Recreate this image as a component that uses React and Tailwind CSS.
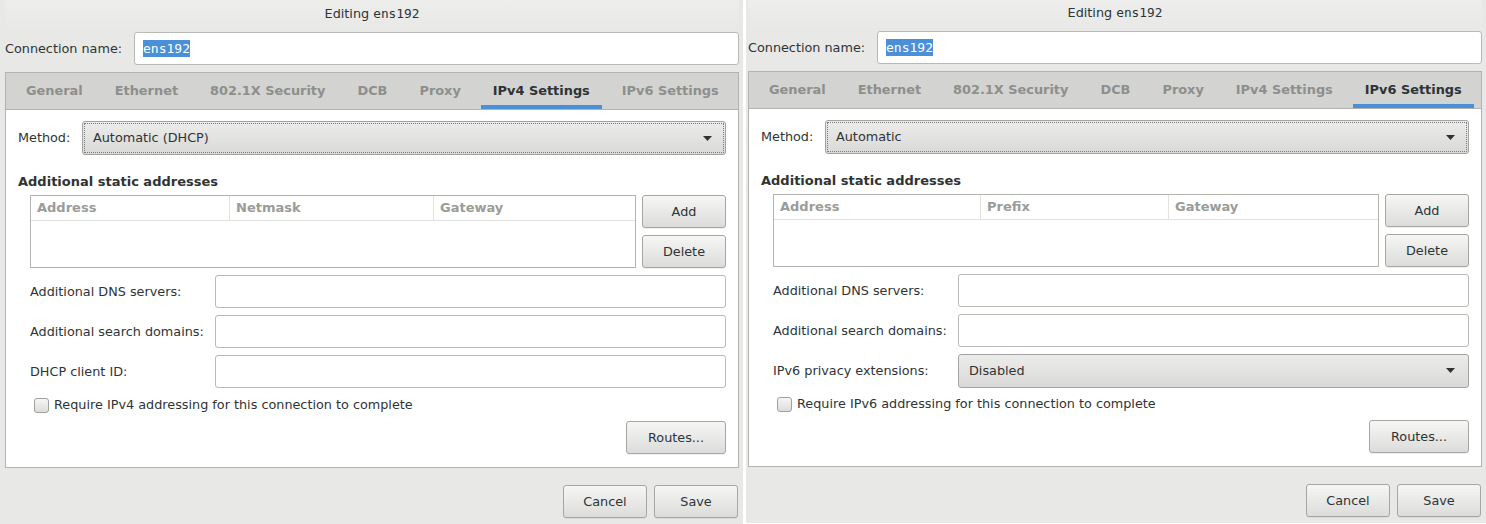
const sans = { fontFamily: '"DejaVu Sans", "Liberation Sans", sans-serif' };

const Button = ({ children, className = '' }) => (
  <button
    className={`h-[33px] rounded-[3px] border border-[#a6a6a4] bg-gradient-to-b from-[#f6f6f5] to-[#dcdcda] text-[12.8px] text-[#2e3436] shadow-[0_1px_0_rgba(0,0,0,0.06)] ${className}`}
  >
    {children}
  </button>
);

const TextInput = ({ className = '' }) => (
  <div className={`h-[33px] rounded-[3px] border border-[#b9b9b6] bg-white ${className}`} />
);

const Arrow = () => (
  <svg width="9" height="5" viewBox="0 0 9 5" className="shrink-0">
    <path d="M0 0h9L4.5 5z" fill="#2e3436" />
  </svg>
);

const Combo = ({ value, focused, className = '' }) => (
  <div
    className={`flex h-[34px] items-center justify-between rounded-[3px] border border-[#a3a3a1] bg-gradient-to-b from-[#ececeb] to-[#d9d9d7] pl-[10px] pr-[13px] text-[12.8px] text-[#2e3436] ${
      focused ? 'outline-1 outline-dotted outline-offset-[-3px] outline-[#7c7c7a]' : ''
    } ${className}`}
  >
    <span>{value}</span>
    <Arrow />
  </div>
);

const tabs = ['General', 'Ethernet', '802.1X Security', 'DCB', 'Proxy', 'IPv4 Settings', 'IPv6 Settings'];

const Panel = ({ v6, className = '' }) => {
  const active = v6 ? 'IPv6 Settings' : 'IPv4 Settings';
  const cols = v6
    ? [['Address', 'w-[207px]'], ['Prefix', 'w-[188px]'], ['Gateway', 'flex-1']]
    : [['Address', 'w-[199px]'], ['Netmask', 'w-[204px]'], ['Gateway', 'flex-1']];
  const rows = v6
    ? ['Additional DNS servers:', 'Additional search domains:', 'IPv6 privacy extensions:']
    : ['Additional DNS servers:', 'Additional search domains:', 'DHCP client ID:'];

  return (
    <div className={`flex h-[524px] flex-col bg-[#e8e8e7] pr-[4px] text-[12.8px] text-[#2e3436] ${className}`} style={sans}>
      {/* title */}
      <div className="flex h-[32px] justify-center bg-gradient-to-b from-[#ededec] to-[#e8e8e7] pt-[6px] leading-[16px]">
        <span>
          Editing <span style={{ fontFamily: '"DejaVu Sans Mono", monospace' }}>ens192</span>
        </span>
      </div>

      {/* connection name */}
      <div className="flex h-[33px] items-center">
        <span className="w-[129px] shrink-0">Connection name:</span>
        <div className="flex h-[33px] flex-1 items-center rounded-[3px] border border-[#b9b9b6] bg-white pl-[8px]">
          <span
            className="bg-[#4a90d9] text-[13px] leading-[17px] text-white"
            style={{ fontFamily: '"DejaVu Sans Mono", monospace' }}
          >
            ens192
          </span>
        </div>
      </div>

      {/* notebook */}
      <div className="mt-[7px] flex flex-col border border-[#b3b3b0] bg-white">
        <div className="flex h-[37px] gap-[8px] border-b border-[#b3b3b0] bg-[#d3d3d1] pl-[8px]">
          {tabs.map((t) => (
            <div
              key={t}
              className={`flex h-full items-center px-[12px] text-[12.9px] font-bold ${
                t === active
                  ? 'border-b-[4px] border-[#4a90d9] pt-[4px] text-[#2e3436]'
                  : 'text-[#8d8f8c]'
              }`}
            >
              {t}
            </div>
          ))}
        </div>

        <div className="flex flex-col px-[12px] pb-[13px] pt-[11px]">
          {/* method */}
          <div className="flex h-[34px] items-center">
            <span className="w-[64px] shrink-0">Method:</span>
            <Combo value={v6 ? 'Automatic' : 'Automatic (DHCP)'} focused className="flex-1" />
          </div>

          <div className="mt-[19px] h-[16px] text-[13px] font-bold leading-[16px]">Additional static addresses</div>

          {/* addresses */}
          <div className="mt-[5px] flex gap-[6px] pl-[12px]">
            <div className="flex h-[73px] flex-1 flex-col border border-[#b3b3b0] bg-white">
              <div className="flex h-[25px] border-b border-[#e1e1df]">
                {cols.map(([c, w], i) => (
                  <div
                    key={c}
                    className={`flex items-center pl-[6px] text-[13px] font-bold text-[#9a9c99] ${w} ${
                      i < 2 ? 'border-r border-[#e1e1df]' : ''
                    }`}
                  >
                    {c}
                  </div>
                ))}
              </div>
            </div>
            <div className="flex w-[84px] flex-col gap-[7px]">
              <Button>Add</Button>
              <Button>Delete</Button>
            </div>
          </div>

          {/* fields */}
          <div className="mt-[7px] flex flex-col gap-[7px] pl-[12px]">
            {rows.map((r, i) => (
              <div key={r} className="flex h-[33px] items-center">
                <span className="w-[185px] shrink-0">{r}</span>
                {v6 && i === 2 ? (
                  <Combo value="Disabled" className="h-[33px] flex-1" />
                ) : (
                  <TextInput className="flex-1" />
                )}
              </div>
            ))}
          </div>

          <div className="mt-[9px] flex h-[16px] items-center pl-[16px]">
            <div className="h-[15px] w-[15px] rounded-[3px] border border-[#a0a09e] bg-gradient-to-b from-[#f6f6f5] to-[#dedcda]" />
            <span className="ml-[5px]">
              Require {v6 ? 'IPv6' : 'IPv4'} addressing for this connection to complete
            </span>
          </div>

          <div className="mt-[8px] flex justify-end">
            <Button className="w-[100px]">Routes...</Button>
          </div>
        </div>
      </div>

      {/* footer */}
      <div className="mt-[17px] flex justify-end gap-[7px] pr-[1px]">
        <Button className="w-[84px]">Cancel</Button>
        <Button className="w-[84px]">Save</Button>
      </div>
    </div>
  );
}

export default function App() {
  return (
    <div className="flex h-[524px] w-[1486px] overflow-hidden bg-white">
      <Panel className="w-[743px] pl-[5px]" />
      <div className="w-[3px] shrink-0 bg-white" />
      <Panel v6 className="-mt-[1px] w-[740px] pl-[2px]" />
    </div>
  );
}
